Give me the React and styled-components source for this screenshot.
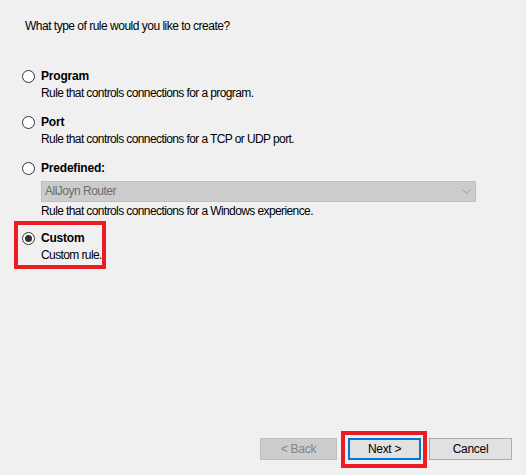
import React from 'react';
import styled, { createGlobalStyle, css } from 'styled-components';

const GlobalStyle = createGlobalStyle`
  html, body { margin: 0; padding: 0; background: #f0f0f0; }
  body {
    font-family: "Liberation Sans", Arial, sans-serif;
    font-size: 12px;
    color: #000;
  }
`;

const Page = styled.div`
  width: 526px;
  height: 475px;
  box-sizing: border-box;
  display: flex;
  flex-direction: column;
  padding: 18px 14px 15px 0;
  background: #f0f0f0;
`;

const Question = styled.div`
  margin-left: 25px;
  line-height: 17px;
  letter-spacing: -0.5px;
`;

const OptionList = styled.div`
  display: flex;
  flex-direction: column;
  margin: 33px 0 0 22px;
`;

const highlightBox = css`
  position: relative;
  &::before {
    content: '';
    position: absolute;
    top: ${(p) => p.$hl.top}px;
    left: ${(p) => p.$hl.left}px;
    bottom: ${(p) => p.$hl.bottom}px;
    ${(p) => (p.$hl.width ? `width: ${p.$hl.width}px;` : `right: ${p.$hl.right}px;`)}
    border: 4px solid #ec1c24;
    box-sizing: border-box;
    pointer-events: none;
  }
`;

const Option = styled.div`
  display: flex;
  flex-direction: column;
  margin-top: ${(p) => p.$gap}px;
  ${(p) => p.$hl && highlightBox}
`;

const OptionHeader = styled.label`
  display: flex;
  align-items: center;
  gap: 6px;
  height: 17px;
`;

const Radio = styled.span`
  width: 13px;
  height: 13px;
  box-sizing: border-box;
  border: 1px solid #333;
  border-radius: 50%;
  background: #fff;
  display: flex;
  align-items: center;
  justify-content: center;
  &::after {
    content: '';
    width: 7px;
    height: 7px;
    border-radius: 50%;
    background: ${(p) => (p.$checked ? '#333' : 'transparent')};
  }
`;

const Label = styled.span`
  font-weight: bold;
  line-height: 17px;
  letter-spacing: -0.2px;
`;

const Desc = styled.div`
  margin-left: 19px;
  line-height: 17px;
  letter-spacing: -0.6px;
`;

const Select = styled.div`
  margin: 4px 0 1px 19px;
  width: 435px;
  height: 21px;
  box-sizing: border-box;
  background: #cccccc;
  border: 1px solid #bfbfbf;
  display: flex;
  align-items: center;
  justify-content: space-between;
  padding: 0 4px 0 3px;
  color: #6d6d6d;
  letter-spacing: -0.5px;
  line-height: 17px;
`;

const Footer = styled.div`
  margin-top: auto;
  display: flex;
  justify-content: flex-end;
  align-items: center;
`;

const HighlightWrap = styled.div`
  display: flex;
  margin-right: ${(p) => p.$mr || 0}px;
  ${highlightBox}
`;

const variants = {
  disabled: css`
    background: #cccccc;
    border: 1px solid #bfbfbf;
    color: #838383;
  `,
  focused: css`
    background: #e1e1e1;
    border: 2px solid #0078d7;
    color: #000;
  `,
  normal: css`
    background: #e1e1e1;
    border: 1px solid #adadad;
    color: #000;
  `,
};

const Button = styled.button`
  width: ${(p) => p.$w}px;
  height: 22px;
  margin: 0 ${(p) => p.$mr || 0}px 0 0;
  box-sizing: border-box;
  padding: 0;
  font-family: "Liberation Sans", Arial, sans-serif;
  font-size: 12px;
  letter-spacing: -0.3px;
  display: flex;
  align-items: center;
  justify-content: center;
  ${(p) => variants[p.$variant]}
`;

const Chevron = () => (
  <svg width="9" height="5" viewBox="0 0 9 5" fill="none">
    <polyline points="0.5,0.5 4.5,4.5 8.5,0.5" stroke="#9a9a9a" strokeWidth="1" />
  </svg>
);

export default function App() {
  return (
    <>
      <GlobalStyle />
      <Page>
        <Question>What type of rule would you like to create?</Question>
        <OptionList>
          <Option $gap={0}>
            <OptionHeader>
              <Radio />
              <Label>Program</Label>
            </OptionHeader>
            <Desc>Rule that controls connections for a program.</Desc>
          </Option>
          <Option $gap={12}>
            <OptionHeader>
              <Radio />
              <Label>Port</Label>
            </OptionHeader>
            <Desc>Rule that controls connections for a TCP or UDP port.</Desc>
          </Option>
          <Option $gap={12}>
            <OptionHeader>
              <Radio />
              <Label>Predefined:</Label>
            </OptionHeader>
            <Select>
              <span>AllJoyn Router</span>
              <Chevron />
            </Select>
            <Desc>Rule that controls connections for a Windows experience.</Desc>
          </Option>
          <Option $gap={10} $hl={{ top: -9, left: -8, bottom: -5, width: 92 }}>
            <OptionHeader>
              <Radio $checked />
              <Label>Custom</Label>
            </OptionHeader>
            <Desc>Custom rule.</Desc>
          </Option>
        </OptionList>
        <Footer>
          <Button $w={77} $mr={11} $variant="disabled" disabled>
            &lt; Back
          </Button>
          <HighlightWrap $mr={8} $hl={{ top: -7, left: -7, bottom: -8, right: -6 }}>
            <Button $w={73} $variant="focused">
              Next &gt;
            </Button>
          </HighlightWrap>
          <Button $w={83} $variant="normal">
            Cancel
          </Button>
        </Footer>
      </Page>
    </>
  );
}
